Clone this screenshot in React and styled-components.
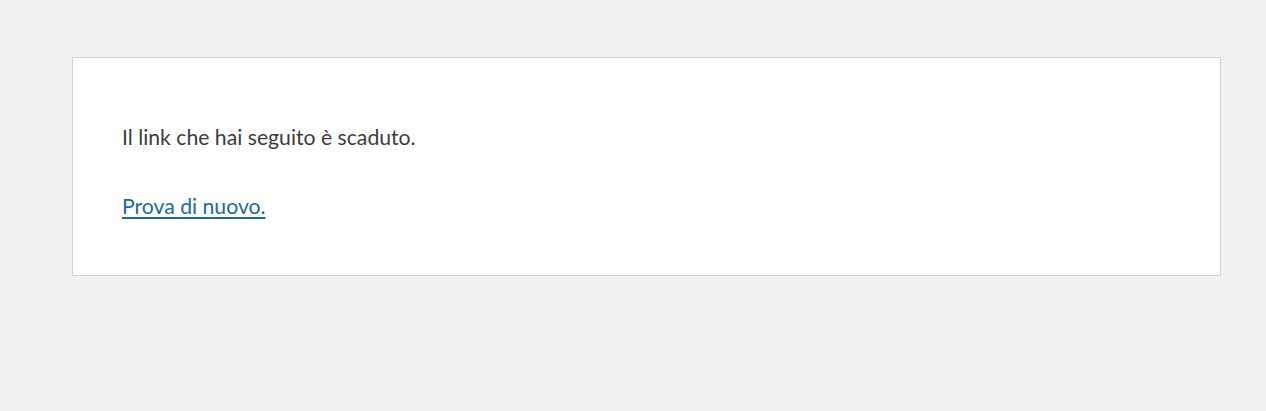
import React from 'react';
import styled, { createGlobalStyle } from 'styled-components';

const GlobalStyle = createGlobalStyle`
  html {
    background: #f1f1f1;
  }
  body {
    margin: 0;
    background: #f1f1f1;
  }
`;

const Page = styled.div`
  padding: 57px 45px 0 72px;
`;

const Card = styled.div`
  background: #fff;
  border: 1px solid #d2d4d6;
  box-shadow: 0 1px 1px rgba(0, 0, 0, 0.04);
  padding: 65px 49px 55px;
  display: flex;
  flex-direction: column;
  gap: 41px;
  color: #3c3c3c;
  font-family: Lato, "Noto Sans", sans-serif;
  font-size: 21.2px;
`;

const Message = styled.p`
  margin: 0;
  line-height: 28px;
`;

const Link = styled.a`
  color: #1d6a96;
  text-decoration: underline;
  text-underline-offset: 3px;
`;

const App = () => (
  <>
    <GlobalStyle />
    <Page>
      <Card>
        <Message>Il link che hai seguito è scaduto.</Message>
        <Message>
          <Link href="#">Prova di nuovo.</Link>
        </Message>
      </Card>
    </Page>
  </>
);

export default App;
